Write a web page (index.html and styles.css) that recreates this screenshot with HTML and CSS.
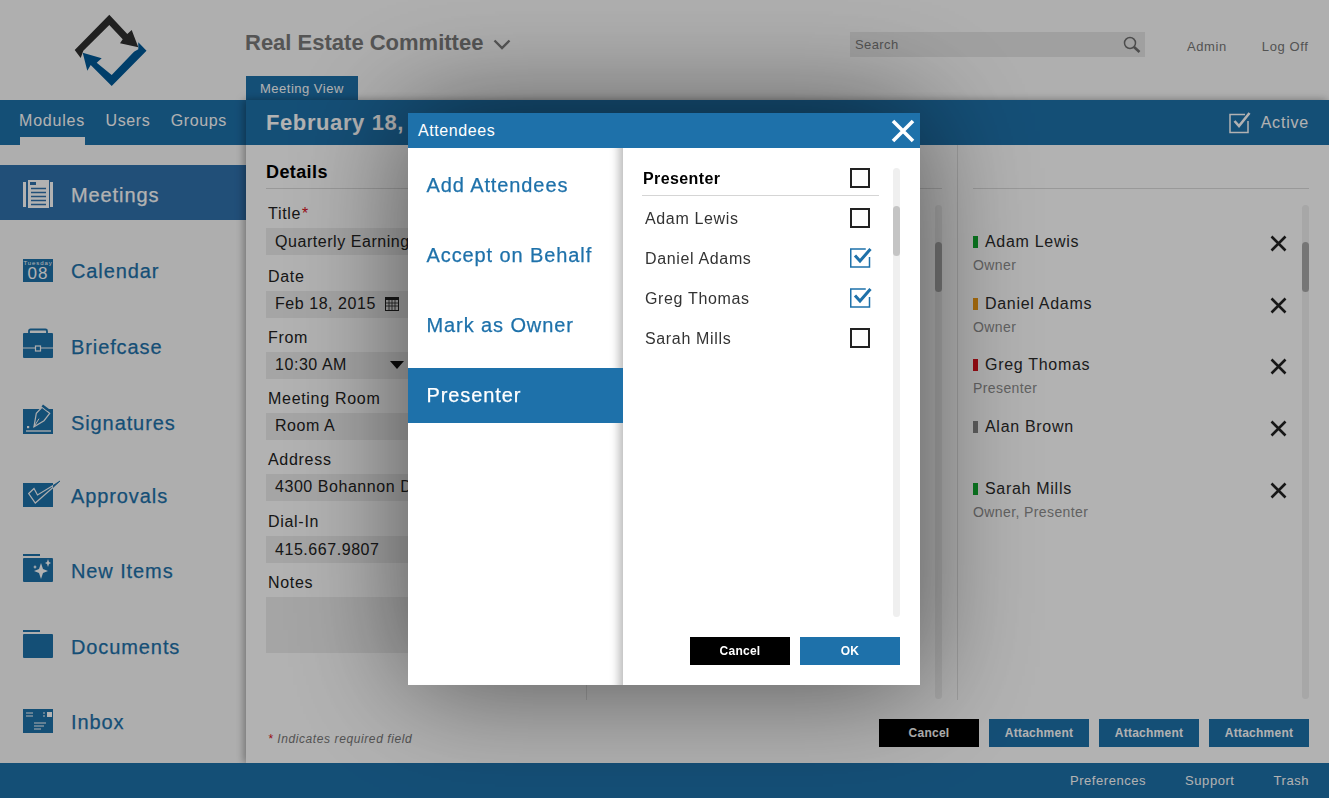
FILE: index.html
```html
<!DOCTYPE html>
<html lang="en">
<head>
<meta charset="utf-8">
<title>Meeting View</title>
<link rel="stylesheet" href="styles.css">
</head>
<body>
<div class="app">
  <header class="topbar">
    <div class="logo-wrap">
      <svg class="logo" width="246" height="100" viewBox="0 0 246 100">
        <polygon fill="#2f2f2f" points="74.700,50 109.300,14.700 127.300,34 131.700,30 138.300,47.300 120,43.300 122.700,39.300 109.300,25 83.300,50.700 80.700,58"/>
        <polygon fill="#005a99" points="82.700,52.700 101.700,58.300 96.700,62.700 111.700,75 134,51.700 138.300,49.300 138.300,42.300 146.500,50.700 111.700,86 90.700,65 87.300,70.700"/>
      </svg>
    </div>
    <div class="top-center">
      <div class="committee"><span>Real Estate Committee</span>
        <svg width="18" height="11" viewBox="0 0 18 11"><path d="M1.500 1.500 9 9l7.500-7.500" fill="none" stroke="#7a7a7a" stroke-width="2.400"/></svg>
      </div>
      <div class="tab">Meeting View</div>
    </div>
    <div class="search">
      <span>Search</span>
      <svg width="18" height="18" viewBox="0 0 18 18"><circle cx="7" cy="7" r="5.500" fill="none" stroke="#6e6e6e" stroke-width="1.500"/><path d="M11 11l5.500 5" stroke="#6e6e6e" stroke-width="2.600"/></svg>
    </div>
    <nav class="account"><span>Admin</span><span>Log Off</span></nav>
  </header>

  <div class="middle">
    <aside class="sidebar">
      <div class="subnav"><span class="current">Modules</span><span>Users</span><span>Groups</span></div>
      <div class="module active">
        <svg class="mod-icon" width="30" height="40" viewBox="0 0 30 40"><g fill="#fff"><rect x="0" y="7" width="3" height="25"/><rect x="27" y="7" width="3" height="25"/><rect x="5" y="5" width="21" height="28"/></g><path d="M7 8.500h6" stroke="#3071ad" stroke-width="3"/><path d="M8 13.500h15M8 17.500h15M8 21.500h15M8 25.500h15M8 29.500h15" stroke="#3071ad" stroke-width="1.300"/></svg>
        <span>Meetings</span>
      </div>
      <ul class="modules">
        <li class="module h76">
          <svg class="mod-icon" width="30" height="40" viewBox="0 0 30 40"><rect y="8" width="30" height="23" fill="#1e71aa"/><text x="15" y="14" class="cal-day">Tuesday</text><text x="15" y="28" class="cal-num">08</text></svg>
          <span>Calendar</span>
        </li>
        <li class="module h76">
          <svg class="mod-icon" width="30" height="40" viewBox="0 0 30 40"><path d="M6 6.500V4q0-1.500 1.500-1.500h15Q24 2.500 24 4v2.500" fill="none" stroke="#1e71aa" stroke-width="1.800"/><path d="M1 6h28q1 0 1 1v23q0 1-1 1H1q-1 0-1-1V7q0-1 1-1z" fill="#1e71aa"/><path d="M0 21h12M18 21h12" stroke="#fafafa" stroke-width="1"/><rect x="12.500" y="19" width="5" height="5" fill="none" stroke="#fafafa" stroke-width="1.200"/></svg>
          <span>Briefcase</span>
        </li>
        <li class="module h73">
          <svg class="mod-icon" width="30" height="40" viewBox="0 0 30 40"><rect y="6" width="30" height="25" fill="#1e71aa"/><path d="M3 28h25" stroke="#fafafa" stroke-width="1.300"/><rect x="4" y="23" width="2.200" height="2.200" fill="#fafafa"/><path d="M11 23.700l2.300-13.400L19 4.300l7.700 6-5.700 7.400z" fill="#1e71aa" stroke="#fafafa" stroke-width="1.200"/><path d="M20 1.500l6 4.500-1.500 2-6-4.500z" fill="#1e71aa"/><path d="M11 23.700l5-8" stroke="#fafafa" stroke-width="1"/></svg>
          <span>Signatures</span>
        </li>
        <li class="module h75">
          <svg class="mod-icon" width="38" height="40" viewBox="0 0 38 40"><rect y="7" width="30" height="24" fill="#1e71aa"/><path d="M5.700 17.500l5.300-5 3.500 6.500L30 9.500 30 11.500 12.300 27z" fill="none" stroke="#fafafa" stroke-width="1.200"/><path d="M30 9.500l7-4.500-7 6.500" fill="#1e71aa" stroke="#1e71aa" stroke-width=".8"/></svg>
          <span>Approvals</span>
        </li>
        <li class="module h76">
          <svg class="mod-icon" width="30" height="40" viewBox="0 0 30 40"><rect y="3" width="17" height="2" fill="#1e71aa"/><rect y="7" width="30" height="24" rx="1" fill="#1e71aa"/><path d="M18 12l2 6 5 2-5 2-2 6-2-6-5-2 5-2z" fill="#fff"/><path d="M25 8l1 3 2 1-2 1-1 3-1-3-2-1 2-1zM12 14l.8 1.500 1.200.5-1.200.5-.8 1.500-.8-1.500L10 16l1.200-.5z" fill="#fff"/></svg>
          <span>New Items</span>
        </li>
        <li class="module h75">
          <svg class="mod-icon" width="30" height="40" viewBox="0 0 30 40"><rect y="3" width="17" height="2" fill="#1e71aa"/><rect y="7" width="30" height="24" rx="1" fill="#1e71aa"/></svg>
          <span>Documents</span>
        </li>
        <li class="module">
          <svg class="mod-icon" width="30" height="40" viewBox="0 0 30 40"><rect y="7" width="30" height="24" fill="#1e71aa"/><path d="M3 11h7M3 14h7M11 21h12M11 24h10M11 27h7" stroke="#fff" stroke-width="1.200"/><rect x="24" y="10" width="5" height="5" fill="#fff"/><path d="M20 11h2M20 14h2" stroke="#fff"/></svg>
          <span>Inbox</span>
        </li>
      </ul>
    </aside>

    <main class="main">
      <div class="titlebar">
        <h1>February 18,</h1>
        <div class="active-flag">
          <svg width="23" height="22" viewBox="0 0 23 22"><path d="M19 9v11.500H1V2.500h15" fill="none" stroke="#fff" stroke-width="1.500"/><path d="M5.500 9l4.500 5L20.500 1" fill="none" stroke="#fff" stroke-width="2.600"/></svg>
          <span>Active</span>
        </div>
      </div>
      <div class="columns">
        <section class="col col-details">
          <h2 class="col-head">Details</h2>
          <label class="label">Title<em>*</em></label>
          <div class="field field-first">Quarterly Earnings Meeting</div>
          <label class="label">Date</label>
          <div class="field field-short"><span>Feb 18, 2015</span>
            <svg class="cal-ico" width="14" height="14" viewBox="0 0 14 14"><rect x=".5" y=".5" width="13" height="13" fill="none" stroke="#222"/><rect x="0" y="0" width="14" height="3" fill="#222"/><path d="M.5 6h13M.5 9h13M4 3v10M7 3v10M10 3v10" stroke="#222" stroke-width=".8"/></svg>
          </div>
          <label class="label">From</label>
          <div class="field field-short"><span>10:30 AM</span><i class="caret"></i></div>
          <label class="label">Meeting Room</label>
          <div class="field">Room A</div>
          <label class="label">Address</label>
          <div class="field field-wide-gap">4300 Bohannon Drive</div>
          <label class="label">Dial-In</label>
          <div class="field field-plain">415.667.9807</div>
          <label class="label">Notes</label>
          <div class="field field-notes"></div>
        </section>

        <section class="col col-mid">
          <div class="col-head"></div>
          <div class="scrollbar sb-main"><div class="thumb"></div></div>
        </section>

        <section class="col col-people">
          <div class="col-head"></div>
          <div class="people-wrap">
            <ul class="people">
              <li class="person"><div class="person-name"><i class="mark m-green"></i>Adam Lewis<svg class="x" width="17" height="17" viewBox="0 0 17 17"><path d="M1.500 1.500l14 14M15.500 1.500l-14 14" stroke="#222" stroke-width="2.600"/></svg></div><div class="person-role">Owner</div></li>
              <li class="person"><div class="person-name"><i class="mark m-orange"></i>Daniel Adams<svg class="x" width="17" height="17" viewBox="0 0 17 17"><path d="M1.500 1.500l14 14M15.500 1.500l-14 14" stroke="#222" stroke-width="2.600"/></svg></div><div class="person-role">Owner</div></li>
              <li class="person"><div class="person-name"><i class="mark m-red"></i>Greg Thomas<svg class="x" width="17" height="17" viewBox="0 0 17 17"><path d="M1.500 1.500l14 14M15.500 1.500l-14 14" stroke="#222" stroke-width="2.600"/></svg></div><div class="person-role">Presenter</div></li>
              <li class="person"><div class="person-name"><i class="mark m-gray"></i>Alan Brown<svg class="x" width="17" height="17" viewBox="0 0 17 17"><path d="M1.500 1.500l14 14M15.500 1.500l-14 14" stroke="#222" stroke-width="2.600"/></svg></div></li>
              <li class="person"><div class="person-name"><i class="mark m-green"></i>Sarah Mills<svg class="x" width="17" height="17" viewBox="0 0 17 17"><path d="M1.500 1.500l14 14M15.500 1.500l-14 14" stroke="#222" stroke-width="2.600"/></svg></div><div class="person-role">Owner, Presenter</div></li>
            </ul>
            <div class="scrollbar sb-main"><div class="thumb"></div></div>
          </div>
        </section>
      </div>
      <div class="actions">
        <p class="required"><em>*</em> Indicates required field</p>
        <div class="btns">
          <button class="btn btn-black">Cancel</button>
          <button class="btn btn-blue">Attachment</button>
          <button class="btn btn-blue">Attachment</button>
          <button class="btn btn-blue">Attachment</button>
        </div>
      </div>
    </main>
  </div>

  <footer class="footer"><span>Preferences</span><span>Support</span><span>Trash</span></footer>
</div>

<div class="overlay">
  <div class="modal">
    <div class="modal-head">
      <span>Attendees</span>
      <svg width="24" height="24" viewBox="0 0 24 24"><path d="M2 2l20 20M22 2L2 22" stroke="#fff" stroke-width="3.600"/></svg>
    </div>
    <div class="modal-body">
      <ul class="modal-menu">
        <li>Add Attendees</li>
        <li>Accept on Behalf</li>
        <li>Mark as Owner</li>
        <li class="on">Presenter</li>
      </ul>
      <div class="modal-pane">
        <div class="pane-top">
          <div class="pick-list">
            <div class="pick pick-head"><span>Presenter</span><i class="box"></i></div>
            <div class="pick"><span>Adam Lewis</span><i class="box"></i></div>
            <div class="pick"><span>Daniel Adams</span>
              <svg class="tick" width="22" height="20" viewBox="0 0 22 20"><path d="M19.500 9v10H.75V1h15" fill="none" stroke="#1e71aa" stroke-width="1.500"/><path d="M5 7.500l5 5.500L20.500 1" fill="none" stroke="#1e71aa" stroke-width="3"/></svg>
            </div>
            <div class="pick"><span>Greg Thomas</span>
              <svg class="tick" width="22" height="20" viewBox="0 0 22 20"><path d="M19.500 9v10H.75V1h15" fill="none" stroke="#1e71aa" stroke-width="1.500"/><path d="M5 7.500l5 5.500L20.500 1" fill="none" stroke="#1e71aa" stroke-width="3"/></svg>
            </div>
            <div class="pick"><span>Sarah Mills</span><i class="box"></i></div>
          </div>
          <div class="scrollbar sb-modal"><div class="thumb"></div></div>
        </div>
        <div class="pane-btns">
          <button class="btn btn-black">Cancel</button>
          <button class="btn btn-ok">OK</button>
        </div>
      </div>
    </div>
  </div>
</div>
</body>
</html>
```

FILE: styles.css
```css
* { box-sizing: border-box; }
html, body { margin: 0; height: 100%; overflow: hidden; }
body { font-family: "Liberation Sans", Arial, sans-serif; color: #2a2a2a; background: #fff; }
ul { list-style: none; margin: 0; padding: 0; }
h1, h2, p { margin: 0; }
em { color: #d8101c; }

.app { width: 1329px; height: 798px; display: flex; flex-direction: column; background: #fbfbfb; }

/* top bar */
.topbar { height: 100px; display: flex; flex: none; }
.logo-wrap { width: 245px; flex: none; }
.logo { display: block; }
.top-center { width: 605px; flex: none; display: flex; flex-direction: column; justify-content: space-between; }
.committee { display: flex; align-items: center; gap: 10px; height: 86px; margin-bottom: -10px; font-size: 22px; font-weight: 700; color: #7a7a7a; }
.committee svg { margin-top: 3px; }
.tab { width: 112px; height: 24px; margin-left: 1px; background: #1e71aa; color: #fff; font-size: 13px; line-height: 25px; padding-left: 14px; letter-spacing: .5px; }
.search { width: 295px; height: 25px; margin-top: 32px; background: #e6e6e6; display: flex; align-items: center; justify-content: space-between; padding: 0 4px 0 5px; font-size: 13px; letter-spacing: .4px; color: #777; }
.account { display: flex; gap: 35px; margin: 39px 0 0 42px; font-size: 13px; letter-spacing: .6px; color: #777; }

/* middle */
.middle { flex: 1; display: flex; min-height: 0; }
.sidebar { width: 246px; flex: none; background: #fafafa; }
.subnav { height: 45px; background: #1e71aa; display: flex; gap: 20.500px; padding-left: 19px; font-size: 16px; letter-spacing: .6px; color: #fff; line-height: 41px; }
.subnav .current { position: relative; width: 66px; white-space: nowrap; letter-spacing: .8px; }
.subnav .current::after { content: ""; position: absolute; left: 1px; right: 0; bottom: 0; height: 8px; background: #fafafa; }
.module { display: flex; height: 75px; align-items: flex-start; padding-left: 23px; font-size: 20px; letter-spacing: .9px; color: #1e71aa; line-height: 40px; -webkit-text-stroke: .25px currentColor; }
.mod-icon { flex: none; display: block; margin-right: 18px; }
.module .mod-icon[width="38"] { margin-right: 10px; }
.module.active { height: 55px; margin-top: 20px; padding-top: 10px; background: #3071ad; color: #fff; }
.modules { padding-top: 31px; }
.h76 { height: 76px; }
.h75 { height: 75px; }
.h73 { height: 73px; }

/* main */
.main { flex: 1; min-width: 0; display: flex; flex-direction: column; background: #fff; box-shadow: -2px 0 8px rgba(0,0,0,.35); position: relative; }
.titlebar { height: 45px; flex: none; background: #1e71aa; display: flex; justify-content: space-between; align-items: center; padding: 0 20px; color: #fff; }
.titlebar h1 { font-size: 22px; letter-spacing: .6px; white-space: nowrap; }
.active-flag { display: flex; align-items: center; gap: 9px; font-size: 16px; letter-spacing: .8px; }
.columns { height: 555px; flex: none; display: flex; }
.col { flex: none; }
.col-details { width: 341px; padding-left: 20px; border-right: 1px solid #e2e2e2; overflow: hidden; }
.col-mid { width: 371px; border-right: 1px solid #e2e2e2; padding: 0 15px 0 15px; }
.col-people { width: 371px; padding: 0 20px 0 15px; }
.col-head { height: 44px; border-bottom: 1px solid #dcdcdc; margin: 0; }
.col-details h2.col-head { font-size: 18px; font-weight: 700; letter-spacing: .4px; line-height: 54px; color: #000; margin-bottom: 5px; }

.label { display: block; height: 34px; padding-top: 6px; line-height: 28px; font-size: 16px; letter-spacing: .7px; color: #222; margin-left: 2px; }
.field { height: 27px; background: #ededed; font-size: 16px; letter-spacing: .55px; line-height: 25px; padding-left: 9px; color: #222; white-space: nowrap; overflow: hidden; width: 300px; }
.field-first { margin-bottom: 2px; line-height: 27px; }
.field-short { width: 150px; display: flex; align-items: center; justify-content: space-between; padding-right: 12px; padding-bottom: 2px; }
.field-wide-gap { margin-bottom: 1px; }
.field-plain { line-height: 27px; }
.cal-ico { margin-right: 5px; }
.caret { width: 0; height: 0; border: 7.500px solid transparent; border-top: 8px solid #111; border-bottom: 0; }
.field-notes { height: 56px; margin-top: 0; }

.sb-main { height: 494px; margin-top: 16px; float: right; }
.scrollbar { width: 7px; background: #efefef; border-radius: 4px; overflow: hidden; padding-top: .1px; }
.thumb { width: 7px; height: 50px; margin-top: 37px; background: #aaa; border-radius: 4px; }
.people-wrap { display: flex; justify-content: space-between; align-items: flex-start; }
.people { width: 314px; padding-top: 43px; }
.person { height: 61.700px; }
.person-name { display: flex; align-items: center; height: 20px; font-size: 16px; letter-spacing: .7px; color: #2a2a2a; }
.mark { width: 5px; height: 12px; margin-right: 7px; }
.m-green { background: #0faa2e; }
.m-orange { background: #f09a14; }
.m-red { background: #d8101c; }
.m-gray { background: #858585; }
.x { margin-left: auto; margin-top: 3px; }
.person-role { margin-top: 3px; font-size: 14px; letter-spacing: .4px; line-height: 20px; color: #8c8c8c; }

.actions { flex: 1; display: flex; justify-content: space-between; padding: 19px 20px 0 22px; }
.required { font-size: 12px; font-style: italic; letter-spacing: .6px; color: #777; line-height: 40px; }
.btns { display: flex; gap: 10px; }
.btn { width: 100px; height: 28px; border: 0; padding: 0; font-family: inherit; font-size: 12px; font-weight: 700; letter-spacing: .25px; color: #fff; }
.btn-black { background: #000; }
.btn-blue, .btn-ok { background: #1e71aa; }

.footer { height: 35px; flex: none; background: #1e71aa; display: flex; justify-content: flex-end; gap: 39px; padding-right: 20px; color: #fff; font-size: 13px; letter-spacing: .55px; line-height: 35px; position: relative; }

/* modal */
.overlay { position: fixed; inset: 0; background: rgba(0,0,0,.3); }
.modal { position: absolute; left: 408px; top: 113px; width: 512px; height: 572px; background: #fff; display: flex; flex-direction: column; box-shadow: 0 0 110px rgba(0,0,0,.55); }
.modal-head { height: 35px; flex: none; background: #1e71aa; color: #fff; display: flex; justify-content: space-between; align-items: center; padding: 0 5px 0 10px; font-size: 16px; letter-spacing: .6px; }
.modal-body { flex: 1; display: flex; min-height: 0; }
.modal-menu { width: 215px; flex: none; padding-top: 10px; box-shadow: inset -12px 0 10px -8px rgba(0,0,0,.28); }
.modal-menu li { height: 55px; margin-bottom: 15px; padding-left: 18.500px; font-size: 20px; letter-spacing: .9px; line-height: 55px; color: #1e71aa; white-space: nowrap; -webkit-text-stroke: .25px currentColor; }
.modal-menu .on { background: #1e71aa; color: #fff; }
.modal-pane { flex: 1; padding: 20px 20px 20px 19px; display: flex; flex-direction: column; justify-content: space-between; }
.pane-top { display: flex; justify-content: space-between; align-items: flex-start; }
.pick-list { width: 237px; }
.pick { height: 40px; display: flex; align-items: center; justify-content: space-between; padding: 0 9px 0 3px; font-size: 16px; letter-spacing: .65px; color: #333; }
.pick > span { padding-top: 2px; }
.pick-head { height: 28px; margin-bottom: 2px; padding-left: 1px; align-items: flex-start; border-bottom: 1px solid #d5d5d5; font-weight: 700; color: #000; letter-spacing: .4px; }
.pick-head > span { padding-top: 2px; }
.box { width: 20px; height: 20px; border: 2px solid #222; }
.tick { margin-right: -2px; }
.sb-modal { height: 449px; }
.sb-modal .thumb { margin-top: 38px; background: #c4c4c4; }
.pane-btns { display: flex; justify-content: flex-end; gap: 10px; }
.cal-day { font: 6px "Liberation Sans", sans-serif; fill: #fff; text-anchor: middle; }
.cal-num { font: 17px "Liberation Sans", sans-serif; fill: #fff; text-anchor: middle; letter-spacing: 1px; }
```
